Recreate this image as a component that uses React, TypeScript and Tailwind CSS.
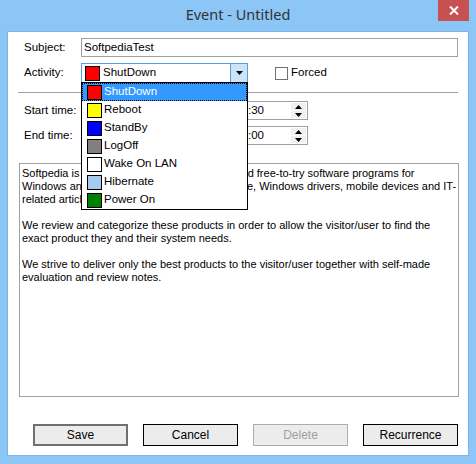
import React from "react";

const title = { fontFamily: '"Noto Sans", "Open Sans", sans-serif' };
const ui = { fontFamily: '"Liberation Sans", Arial, sans-serif' };

const activities = [
  { name: "ShutDown", color: "bg-[#ff0000]" },
  { name: "Reboot", color: "bg-[#ffff00]" },
  { name: "StandBy", color: "bg-[#0000ff]" },
  { name: "LogOff", color: "bg-[#808080]" },
  { name: "Wake On LAN", color: "bg-white" },
  { name: "Hibernate", color: "bg-[#a6caf0]" },
  { name: "Power On", color: "bg-[#008000]" },
];

const Swatch: React.FC<{ color: string }> = ({ color }) => (
  <span className={`inline-block w-[15px] h-[15px] border border-black shrink-0 ${color}`} />
);

const Tri: React.FC<{ up?: boolean }> = ({ up }) => (
  <svg width="7" height="4" viewBox="0 0 7 4">
    <path d={up ? "M0 4 L3.5 0 L7 4 Z" : "M0 0 L7 0 L3.5 4 Z"} fill="#000" />
  </svg>
);

const TimeField: React.FC<{ label: string; text: string }> = ({ label, text }) => (
  <div className="flex items-center h-[19px]">
    <span className="w-[57px] text-[11.5px] whitespace-nowrap">{label}</span>
    <div className="w-[227px] h-[19px] border border-[#a0a0a0] bg-white flex items-center">
      <span className="flex-1 pl-[166px] text-[11.5px] leading-none">{text}</span>
      <div className="flex flex-col w-[15px] h-[15px] mr-[1px] gap-[1px]">
        <div className="flex-1 bg-[#f0f0f0] flex items-center justify-center">
          <Tri up />
        </div>
        <div className="flex-1 bg-[#f0f0f0] flex items-center justify-center">
          <Tri />
        </div>
      </div>
    </div>
  </div>
);

const Button: React.FC<{ label: string; kind?: "default" | "disabled" }> = ({ label, kind }) => (
  <button
    className={`w-[95px] h-[22px] bg-[#ececec] text-[12px] flex items-center justify-center ${
      kind === "default"
        ? "border-2 border-[#707070] text-black"
        : kind === "disabled"
        ? "border border-[#adadad] text-[#a0a0a0]"
        : "border border-black text-black"
    }`}
  >
    {label}
  </button>
);

export default function App() {
  return (
    <div className="w-[476px] h-[464px] bg-[#8cc6f7] flex flex-col text-black" style={ui}>
      <div className="relative h-[31px] flex items-center justify-center shrink-0">
        <span className="text-[14.5px] text-[#333] -mt-[1px]" style={title}>
          Event - Untitled
        </span>
        <div className="absolute top-0 right-[7px] w-[31px] h-[21px] bg-[#c75050] flex items-center justify-center">
          <svg width="10" height="9" viewBox="0 0 10 9">
            <path d="M1 0.5 L9 8.5 M9 0.5 L1 8.5" stroke="#fff" strokeWidth="2" />
          </svg>
        </div>
      </div>

      <div className="mx-[7px] h-[425px] bg-white border border-[#7eb4e6] flex flex-col">
        {/* subject */}
        <div className="flex items-center mt-[6px] h-[19px]">
          <span className="w-[73px] pl-[16px] text-[11.5px]">Subject:</span>
          <div className="w-[377px] h-[19px] border border-[#a0a0a0] flex items-center pl-[2px] text-[11.5px]">
            SoftpediaTest
          </div>
        </div>

        {/* activity */}
        <div className="flex items-center mt-[6px] h-[20px]">
          <span className="w-[73px] pl-[16px] text-[11.5px]">Activity:</span>
          <div className="relative w-[167px] h-[20px]">
            <div className="w-full h-full border border-[#569de5] bg-white flex items-center">
              <div className="flex-1 flex items-center gap-[3px] pl-[3px]">
                <Swatch color="bg-[#ff0000]" />
                <span className="text-[11.5px]">ShutDown</span>
              </div>
              <div className="w-[17px] h-full bg-[#cce4f7] border-l border-[#569de5] flex items-center justify-center">
                <Tri />
              </div>
            </div>
            <div className="absolute left-0 top-[19px] w-[167px] border border-black bg-white z-10 flex flex-col">
              {activities.map((a, i) => (
                <div
                  key={a.name}
                  className={`h-[18px] flex items-center gap-[2px] pl-[5px] text-[11.5px] ${
                    i === 0 ? "bg-[#3399ff] text-white outline outline-1 outline-dotted outline-black -outline-offset-1" : ""
                  }`}
                >
                  <Swatch color={a.color} />
                  <span>{a.name}</span>
                </div>
              ))}
            </div>
          </div>
          <div className="flex items-center ml-[27px] gap-[3px]">
            <span className="w-[13px] h-[13px] border border-[#707070] bg-white" />
            <span className="text-[11.5px]">Forced</span>
          </div>
        </div>

        {/* separator */}
        <div className="ml-[10px] w-[440px] h-px bg-[#a0a0a0] mt-[9px]" />

        {/* times */}
        <div className="flex flex-col gap-[6px] mt-[8px] pl-[16px]">
          <TimeField label="Start time:" text=":30" />
          <TimeField label="End time:" text=":00" />
        </div>

        {/* memo */}
        <div className="ml-[11px] mt-[18px] w-[440px] h-[234px] border border-[#a0a0a0] px-[2px] pt-[3px] text-[11px] leading-[13px] whitespace-nowrap">
          <p>
            Softpedia is a library of over 1,300,000 free and free-to-try software programs for
            <br />
            Windows and Unix/Linux, games, Mac software, Windows drivers, mobile devices and IT-
            <br />
            related articles.
          </p>
          <p className="mt-[13px]">
            We review and categorize these products in order to allow the visitor/user to find the
            <br />
            exact product they and their system needs.
          </p>
          <p className="mt-[13px]">
            We strive to deliver only the best products to the visitor/user together with self-made
            <br />
            evaluation and review notes.
          </p>
        </div>

        {/* buttons */}
        <div className="flex gap-[15px] ml-[25px] mt-[27px]">
          <Button label="Save" kind="default" />
          <Button label="Cancel" />
          <Button label="Delete" kind="disabled" />
          <Button label="Recurrence" />
        </div>
      </div>
    </div>
  );
}
